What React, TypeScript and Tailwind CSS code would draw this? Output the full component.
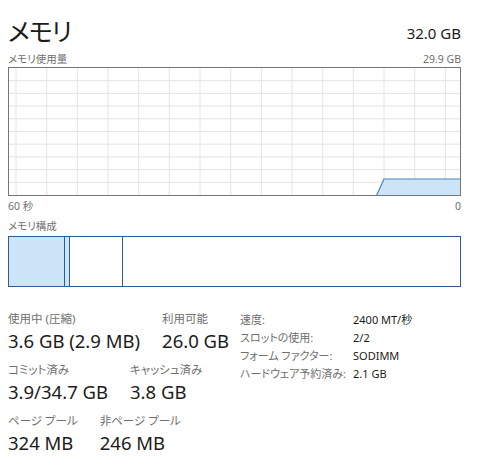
import React from 'react'

const FONT = "font-['Segoe_UI','Noto_Sans','Noto_Sans_CJK_JP',sans-serif]"

// grid lines in the usage graph (inner box 451 x 127)
const VLINES = Array.from({ length: 15 }, (_, i) => 7 + i * 30.67)
const HLINES = Array.from({ length: 9 }, (_, i) => (i + 1) * 12.7)

const STATS = [
  [
    { label: '使用中 (圧縮)', value: '3.6 GB (2.9 MB)' },
    { label: '利用可能', value: '26.0 GB' },
  ],
  [
    { label: 'コミット済み', value: '3.9/34.7 GB' },
    { label: 'キャッシュ済み', value: '3.8 GB' },
  ],
  [
    { label: 'ページ プール', value: '324 MB' },
    { label: '非ページ プール', value: '246 MB' },
  ],
]

const SPECS = [
  { k: '速度:', v: '2400 MT/秒' },
  { k: 'スロットの使用:', v: '2/2' },
  { k: 'フォーム ファクター:', v: 'SODIMM' },
  { k: 'ハードウェア予約済み:', v: '2.1 GB' },
]

function UsageGraph() {
  return (
    <div className="h-[129px] border border-[#767676] bg-white">
      <svg width="451" height="127" viewBox="0 0 451 127" className="block">
        {VLINES.map(x => (
          <line key={'v' + x} x1={x} y1={0} x2={x} y2={127} stroke="#e4e4e4" strokeWidth={1} />
        ))}
        {HLINES.map(y => (
          <line key={'h' + y} x1={0} y1={y} x2={451} y2={y} stroke="#e4e4e4" strokeWidth={1} />
        ))}
        <polygon points="367.7,127 375,111 451,111 451,127" fill="#cce3f8" />
        <polyline points="367.7,127 375,111 451,111" fill="none" stroke="#4a86bb" strokeWidth={1.2} />
      </svg>
    </div>
  )
}

function CompositionBar() {
  return (
    <div className="flex h-[51px] border border-[#2a5e94]">
      <div className="w-[56px] bg-[#cce3f8] border-r border-[#2a5e94]" />
      <div className="w-[5px] bg-[#cce3f8] border-r border-[#2a5e94]" />
      <div className="w-[53px] border-r border-[#2a5e94]" />
      <div className="flex-1" />
    </div>
  )
}

export default function App() {
  return (
    <div className={`w-[481px] h-[471px] bg-white px-[8px] pr-[20px] text-[#1b1b1b] ${FONT}`}>
      <div className="flex justify-between items-end h-[44px]">
        <h1 className="text-[25px] leading-[26px] [font-feature-settings:'palt'] tracking-[-1px]">メモリ</h1>
        <span className="text-[15px] leading-[20px] mb-[1px]">32.0 GB</span>
      </div>

      <div className="flex justify-between mt-[8px] text-[10.5px] leading-[14px] text-[#707070] [font-feature-settings:'palt']">
        <span>メモリ使用量</span>
        <span>29.9 GB</span>
      </div>
      <div className="mt-[1px]">
        <UsageGraph />
      </div>
      <div className="flex justify-between mt-[3px] text-[10.5px] leading-[14px] text-[#707070]">
        <span>60 秒</span>
        <span>0</span>
      </div>
      <div className="mt-[6px] text-[10.5px] leading-[14px] text-[#707070] [font-feature-settings:'palt']">メモリ構成</div>
      <div className="mt-[3px]">
        <CompositionBar />
      </div>

      <div className="flex mt-[24px]">
        <div className="w-[232px] flex flex-col gap-[9px]">
          {STATS.map((row, i) => (
            <div key={i} className="flex gap-[22px]">
              {row.map(s => (
                <div key={s.label} className="flex flex-col whitespace-nowrap">
                  <span className="text-[11.5px] leading-[16px] text-[#707070] [font-feature-settings:'palt']">{s.label}</span>
                  <span className="text-[18.5px] leading-[25px] mt-[1px]">{s.value}</span>
                </div>
              ))}
            </div>
          ))}
        </div>
        <div className="flex flex-col text-[11px] leading-[18px] whitespace-nowrap">
          {SPECS.map(s => (
            <div key={s.k} className="flex">
              <span className="w-[113px] shrink-0 text-[#707070] [font-feature-settings:'palt']">{s.k}</span>
              <span>{s.v}</span>
            </div>
          ))}
        </div>
      </div>
    </div>
  )
}
